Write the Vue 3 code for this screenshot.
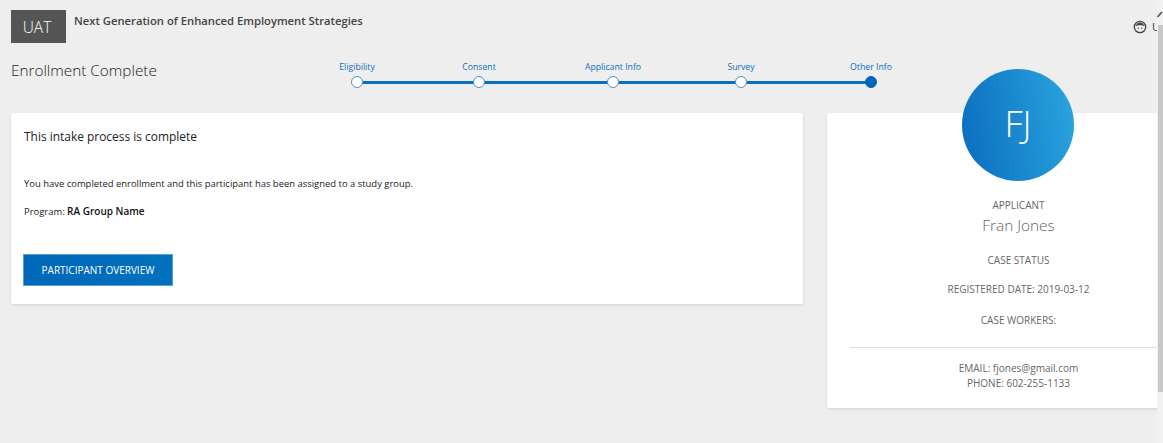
<template>
  <div class="page">
    <header class="topbar">
      <div class="env-badge">UAT</div>
      <h1 class="app-title">Next Generation of Enhanced Employment Strategies</h1>
      <div class="user-menu">
        <svg class="user-icon" viewBox="0 0 14 14" width="14" height="14" aria-hidden="true">
          <circle cx="7" cy="7" r="5.700" fill="none" stroke="#444" stroke-width="1.300" />
          <path d="M2.500 6.500C3.200 3.400 5 2.400 7 2.400s3.800 1 4.500 4.100C10 5.300 8.500 5 7 5.300 5.500 5 4 5.300 2.500 6.500z" fill="#444" />
          <circle cx="5.200" cy="8.300" r="0.700" fill="#444" />
          <circle cx="8.800" cy="8.300" r="0.700" fill="#444" />
        </svg>
        <span class="user-name">U</span>
      </div>
    </header>

    <section class="heading-row">
      <h2 class="page-title">Enrollment Complete</h2>
      <ol class="stepper">
        <li
          v-for="step in steps"
          :key="step.label"
          class="step"
          :class="{ 'step--current': step.current }"
        >
          <span class="step__label">{{ step.label }}</span>
          <span class="step__dot"></span>
        </li>
      </ol>
    </section>

    <main class="content">
      <section class="card intake">
        <h3 class="intake__title">This intake process is complete</h3>
        <p class="intake__text">You have completed enrollment and this participant has been assigned to a study group.</p>
        <p class="intake__program">Program: <strong>RA Group Name</strong></p>
        <button class="primary-btn" type="button">PARTICIPANT OVERVIEW</button>
      </section>

      <aside class="card applicant">
        <div class="avatar">FJ</div>
        <div class="applicant__role">APPLICANT</div>
        <div class="applicant__name">Fran Jones</div>
        <p class="applicant__line applicant__line--status">CASE STATUS</p>
        <p class="applicant__line applicant__line--date">REGISTERED DATE: 2019-03-12</p>
        <p class="applicant__line">CASE WORKERS:</p>
        <div class="applicant__contact">
          <div>EMAIL: fjones@gmail.com</div>
          <div>PHONE: 602-255-1133</div>
        </div>
      </aside>
    </main>

    <div class="scrollbar">
      <svg class="scrollbar__arrow" viewBox="0 0 6 8" width="6" height="8" aria-hidden="true">
        <path d="M0.500 7L5 2" fill="none" stroke="#555" stroke-width="1.600" />
      </svg>
      <div class="scrollbar__thumb"></div>
    </div>
  </div>
</template>

<script setup>
const steps = [
  { label: 'Eligibility' },
  { label: 'Consent' },
  { label: 'Applicant Info' },
  { label: 'Survey' },
  { label: 'Other Info', current: true },
]
</script>

<style>
html,
body {
  margin: 0;
  overflow: hidden;
  background: #eee;
}
</style>

<style scoped>
.page {
  position: relative;
  height: 443px;
  overflow: hidden;
  padding-left: 11px;
  box-sizing: border-box;
  font-family: "Open Sans", "Noto Sans", sans-serif;
  color: #333;
  background: #eee;
}

.topbar {
  display: flex;
  align-items: flex-start;
  height: 43px;
  padding-top: 10px;
}

.env-badge {
  width: 55px;
  height: 33px;
  padding-right: 3px;
  box-sizing: border-box;
  background: #555;
  color: #fff;
  font-size: 15.500px;
  line-height: 35px;
  font-weight: 300;
  text-align: center;
}

.app-title {
  margin: 3px 0 0 8px;
  font-size: 11.240px;
  line-height: 16px;
  font-weight: 600;
  color: #444;
}

.user-menu {
  position: absolute;
  top: 20px;
  left: 1133px;
  display: flex;
  align-items: center;
  gap: 5px;
  font-size: 11px;
  line-height: 14px;
}

.user-icon {
  display: block;
}

.heading-row {
  display: flex;
  height: 50px;
}

.page-title {
  flex: none;
  width: 340px;
  margin: 6px 0 0;
  font-size: 15.300px;
  line-height: 22px;
  font-weight: 300;
  color: #222;
}

.stepper {
  position: relative;
  display: grid;
  grid-template-columns: 122px 134px 128px 130px 12px;
  height: 46px;
  margin: 0;
  padding: 0;
  list-style: none;
}

.stepper::before {
  content: "";
  position: absolute;
  left: 6px;
  right: 6px;
  top: 28px;
  height: 3px;
  background: #0670bf;
}

.step {
  position: relative;
  height: 46px;
}

.step__label {
  position: absolute;
  top: 8px;
  left: 6px;
  transform: translateX(-50%);
  white-space: nowrap;
  font-size: 8.700px;
  line-height: 12px;
  color: #0670bf;
}

.step__dot {
  position: absolute;
  top: 23px;
  left: 0;
  width: 12px;
  height: 12px;
  box-sizing: border-box;
  border: 1.5px solid #4a93cc;
  border-radius: 50%;
  background: #fff;
}

.step--current .step__dot {
  background: #0067b8;
  border-color: #0067b8;
}

.content {
  display: flex;
  align-items: flex-start;
  gap: 24px;
  padding-top: 10px;
}

.card {
  background: #fff;
  border-radius: 2px;
  box-shadow: 0 1px 3px rgba(0, 0, 0, 0.12);
  box-sizing: border-box;
}

.intake {
  flex: none;
  width: 792px;
  height: 191px;
  padding: 14px 12px;
}

.intake__title {
  margin: 0 0 0 1px;
  font-size: 11.950px;
  line-height: 20px;
  font-weight: 400;
  color: #222;
}

.intake__text {
  margin: 30px 0 0 1px;
  font-size: 9.450px;
  line-height: 14px;
  color: #222;
}

.intake__program {
  margin: 13px 0 0 1px;
  font-size: 9.450px;
  line-height: 14px;
  color: #222;
}

.intake__program strong {
  font-size: 10px;
  font-weight: 600;
  color: #111;
}

.primary-btn {
  display: block;
  width: 150px;
  height: 32px;
  margin-top: 35px;
  padding: 0;
  border: 1px solid #5a9fd6;
  background: linear-gradient(90deg, #0067b8, #0071bd);
  color: #fff;
  font-family: inherit;
  font-size: 10px;
  font-weight: 400;
}

.applicant {
  position: relative;
  flex: none;
  width: 360px;
  height: 295px;
  padding: 85px 0 0 23px;
  text-align: center;
  color: #666;
  font-size: 10px;
  line-height: 14px;
}

.avatar {
  position: absolute;
  top: -44px;
  left: 135px;
  width: 112px;
  height: 112px;
  border-radius: 50%;
  background: linear-gradient(80deg, #0a6cc0, #2ba6de);
  color: #fff;
  font-size: 36px;
  line-height: 110px;
  font-weight: 300;
}

.applicant__role {
  line-height: 14px;
}

.applicant__name {
  margin-top: 4px;
  font-size: 15.400px;
  line-height: 20px;
  font-weight: 300;
  color: #666;
}

.applicant__line {
  margin: 17px 0 0;
}

.applicant__line--status {
  margin-top: 17px;
}

.applicant__line--date {
  margin-top: 15px;
}

.applicant__contact {
  margin-top: 20px;
  padding-top: 13px;
  border-top: 1px solid #ddd;
  line-height: 15px;
}

.scrollbar {
  position: absolute;
  top: 0;
  right: 0;
  bottom: 0;
  width: 6px;
  background: #f1f1f1;
}

.scrollbar__arrow {
  position: absolute;
  top: 10px;
  left: 0;
}

.scrollbar__thumb {
  position: absolute;
  top: 25px;
  left: 1px;
  right: 0;
  height: 367px;
  background: #c8c8c8;
}
</style>
